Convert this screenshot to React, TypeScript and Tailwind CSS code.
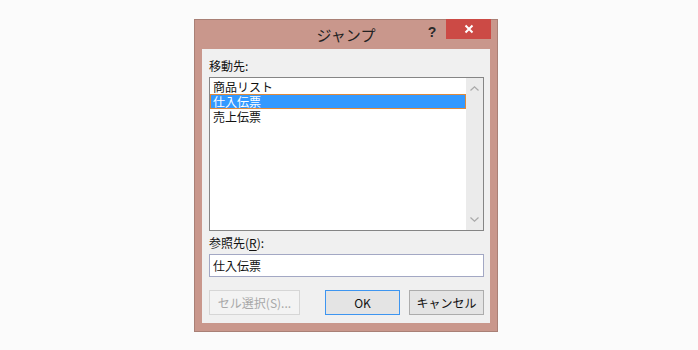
import React from "react";

const font = { fontFamily: '"Noto Sans CJK JP", "Noto Sans", sans-serif' };

export default function App() {
  return (
    <div className="w-[698px] h-[350px] bg-[#fbfbfb] pt-[19px] pl-[194px]" style={font}>
      <div className="w-[304px] h-[313px] border border-[#a98076] bg-[#c9978c] flex flex-col">
        {/* title bar */}
        <div className="h-[29px] relative flex items-center justify-center pt-[1px]">
          <span className="text-[15px] leading-[18px] text-[#222]">ジャンプ</span>
          <span className="absolute left-[231px] top-[3px] w-[12px] text-center text-[14px] leading-[18px] font-bold text-[#2a2a2a]" style={{ fontFamily: '"Liberation Sans", sans-serif' }}>?</span>
          <div className="absolute right-[6px] top-[-1px] w-[45px] h-[20px] bg-[#cc4a45] flex items-center justify-center">
            <svg width="10" height="10" viewBox="0 0 10 10">
              <path d="M1.5 1.5 L8.5 8.5 M8.5 1.5 L1.5 8.5" stroke="#ffffff" strokeWidth="2" />
            </svg>
          </div>
        </div>
        {/* client area */}
        <div className="mx-[7px] h-[274px] bg-[#f0f0f0] flex flex-col text-[12px] text-[#111]">
          <div className="h-[28px] pl-[7px] pt-[9px] leading-[16px]">移動先:</div>
          <div className="ml-[7px] w-[275px] h-[154px] border border-[#858585] bg-white flex">
            <div className="flex-1 pt-[1px] flex flex-col">
              <div className="h-[15px] leading-[15px] pl-[3px]">商品リスト</div>
              <div className="h-[15px] leading-[13px] pl-[2px] bg-[#3399ff] text-white border border-[#e08a3a]">仕入伝票</div>
              <div className="h-[15px] leading-[15px] pl-[3px]">売上伝票</div>
            </div>
            <div className="w-[17px] bg-[#ebebeb] flex flex-col items-center justify-between pt-[8px] pb-[8px]">
              <svg width="9" height="5" viewBox="0 0 9 5">
                <path d="M0.5 4.5 L4.5 0.8 L8.5 4.5" stroke="#a9a9a9" strokeWidth="1.2" fill="none" />
              </svg>
              <svg width="9" height="5" viewBox="0 0 9 5">
                <path d="M0.5 0.5 L4.5 4.2 L8.5 0.5" stroke="#a9a9a9" strokeWidth="1.2" fill="none" />
              </svg>
            </div>
          </div>
          <div className="h-[23px] pl-[7px] pt-[4px] leading-[16px]">
            参照先(<span className="underline underline-offset-2">R</span>):
          </div>
          <div className="ml-[7px] w-[275px] h-[23px] border border-[#a3a8c4] bg-white pl-[3px] leading-[21px]">仕入伝票</div>
          <div className="ml-[7px] w-[275px] mt-[13px] h-[25px] flex">
            <div className="w-[91px] h-[25px] border border-[#d6d6d6] bg-[#f3f3f3] text-[#a8a8a8] flex items-center justify-center">セル選択(S)...</div>
            <div className="ml-auto w-[75px] h-[25px] border border-[#3d95f0] bg-[#e4e4e4] flex items-center justify-center">OK</div>
            <div className="ml-[9px] w-[75px] h-[25px] border border-[#acacac] bg-[#e4e4e4] flex items-center justify-center">キャンセル</div>
          </div>
        </div>
      </div>
    </div>
  );
}
